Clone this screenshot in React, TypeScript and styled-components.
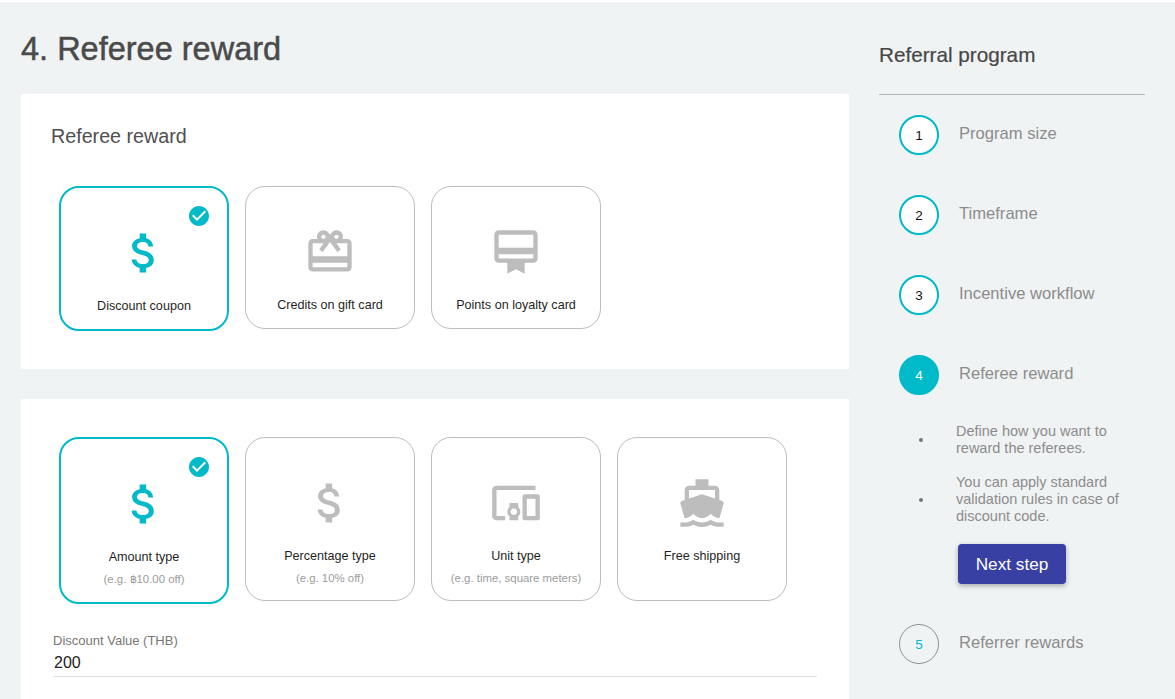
import React from 'react';
import styled, { createGlobalStyle } from 'styled-components';
import {
  MdAttachMoney,
  MdCardGiftcard,
  MdCardMembership,
  MdCheckCircle,
  MdDevicesOther,
  MdDirectionsBoat,
} from 'react-icons/md';

const teal = '#00b9c9';

const GlobalStyle = createGlobalStyle`
  html, body {
    margin: 0;
    height: 699px;
    overflow: hidden;
    background: #fff;
    font-family: "Liberation Sans", Arial, sans-serif;
  }
`;

const Page = styled.div`
  display: flex;
  gap: 30px;
  height: 697px;
  margin-top: 2px;
  padding: 0 30px 0 21px;
  overflow: hidden;
  background: #f0f3f4;
`;

const Main = styled.main`
  width: 828px;
  flex: none;
`;

const Heading = styled.h1`
  margin: 0;
  padding-top: 27px;
  box-sizing: border-box;
  height: 92px;
  font-size: 32.5px;
  line-height: 40px;
  font-weight: 400;
  color: #4a4a4a;
  -webkit-text-stroke: 0.5px #4a4a4a;
`;

const Card = styled.section<{ $top?: number }>`
  background: #fff;
  margin-bottom: 30px;
  padding: ${(p) => p.$top ?? 30}px 30px 38px 38px;
`;

const CardTitle = styled.h2`
  margin: 0 0 38px -8px;
  font-size: 19.7px;
  line-height: 24px;
  font-weight: 400;
  color: #4f4f4f;
`;

const TileRow = styled.div`
  display: flex;
  align-items: flex-start;
  gap: 16px;
`;

const Tile = styled.div<{ $selected?: boolean; $tall?: boolean }>`
  position: relative;
  box-sizing: border-box;
  width: 170px;
  height: ${(p) => (p.$tall ? (p.$selected ? 167 : 164) : p.$selected ? 145 : 143)}px;
  padding-top: 39px;
  border: ${(p) => (p.$selected ? `2px solid ${teal}` : '1px solid #bdbdbd')};
  border-radius: 20px;
  display: flex;
  flex-direction: column;
  align-items: center;
  color: ${(p) => (p.$selected ? teal : '#bdbdbd')};
`;

const Badge = styled.span`
  position: absolute;
  top: 16px;
  right: 16px;
  display: flex;
  font-size: 24px;
  color: ${teal};
`;

const IconBox = styled.span`
  display: flex;
  font-size: 52px;
  height: 52px;
`;

const TileLabel = styled.div`
  margin-top: 19px;
  font-size: 12.6px;
  line-height: 16px;
  color: #1f1f1f;
`;

const TileHint = styled.div`
  margin-top: 7px;
  font-size: 11.4px;
  line-height: 14px;
  color: #9b9b9b;
`;

const Field = styled.div`
  margin: 29px 0 0 -6px;
  width: 764px;
  border-bottom: 1px solid #e0e0e0;
`;

const FieldLabel = styled.div`
  font-size: 13px;
  line-height: 16px;
  color: #777;
`;

const FieldValue = styled.div`
  margin: 4px 0 0 1px;
  padding-bottom: 3px;
  font-size: 16px;
  line-height: 20px;
  color: #222;
`;

const Sidebar = styled.aside`
  width: 266px;
  flex: none;
`;

const SideTitle = styled.h2`
  margin: 0;
  box-sizing: border-box;
  height: 93px;
  padding-top: 41px;
  border-bottom: 1px solid #b5b8ba;
  font-size: 20.7px;
  line-height: 24px;
  font-weight: 400;
  color: #474747;
  -webkit-text-stroke: 0.2px #474747;
`;

const Steps = styled.div`
  display: flex;
  flex-direction: column;
  gap: 40px;
  padding: 20px 0 0 20px;
`;

const StepRow = styled.div`
  display: flex;
  gap: 20px;
  align-items: flex-start;
`;

const Circle = styled.div<{ $state: 'done' | 'active' | 'todo' }>`
  box-sizing: border-box;
  width: 40px;
  height: 40px;
  flex: none;
  border-radius: 50%;
  display: flex;
  align-items: center;
  justify-content: center;
  font-size: 13.5px;
  border: ${(p) => (p.$state === 'todo' ? '1px solid #8f8f8f' : `2px solid ${teal}`)};
  background: ${(p) => (p.$state === 'done' ? '#fff' : p.$state === 'active' ? teal : 'transparent')};
  color: ${(p) => (p.$state === 'done' ? '#111' : p.$state === 'active' ? '#fff' : teal)};
`;

const StepLabel = styled.div`
  font-size: 16.6px;
  line-height: 20px;
  margin-top: 9px;
  color: #8c8c8c;
`;

const Details = styled.div`
  margin-top: -12px;
  padding-left: 20px;
`;

const Tips = styled.ul`
  margin: 0;
  padding: 0;
  list-style: none;
  display: flex;
  flex-direction: column;
  gap: 17px;
`;

const Tip = styled.li`
  display: flex;
  align-items: center;
  font-size: 14.5px;
  line-height: 17px;
  color: #8c8c8c;
  &::before {
    content: '';
    flex: none;
    width: 4px;
    height: 4px;
    margin-right: 33px;
    border-radius: 50%;
    background: #777;
  }
`;

const NextButton = styled.button`
  display: block;
  width: 108px;
  height: 40px;
  margin: 19px 0 0 39px;
  border: 0;
  border-radius: 4px;
  background: #3840a3;
  color: #fff;
  font-family: inherit;
  font-size: 17.2px;
  box-shadow: 0 2px 5px rgba(0, 0, 0, 0.3);
`;

const rewards = [
  { label: 'Discount coupon', Icon: MdAttachMoney, selected: true },
  { label: 'Credits on gift card', Icon: MdCardGiftcard },
  { label: 'Points on loyalty card', Icon: MdCardMembership },
];

const types = [
  { label: 'Amount type', hint: '(e.g. ฿10.00 off)', Icon: MdAttachMoney, selected: true },
  { label: 'Percentage type', hint: '(e.g. 10% off)', Icon: MdAttachMoney },
  { label: 'Unit type', hint: '(e.g. time, square meters)', Icon: MdDevicesOther },
  { label: 'Free shipping', Icon: MdDirectionsBoat },
];

const App = () => (
  <Page>
    <GlobalStyle />
    <Main>
      <Heading>4. Referee reward</Heading>
      <Card>
        <CardTitle>Referee reward</CardTitle>
        <TileRow>
          {rewards.map(({ label, Icon, selected }) => (
            <Tile key={label} $selected={selected}>
              {selected && (
                <Badge>
                  <MdCheckCircle />
                </Badge>
              )}
              <IconBox>
                <Icon />
              </IconBox>
              <TileLabel>{label}</TileLabel>
            </Tile>
          ))}
        </TileRow>
      </Card>
      <Card $top={38}>
        <TileRow>
          {types.map(({ label, hint, Icon, selected }) => (
            <Tile key={label} $selected={selected} $tall>
              {selected && (
                <Badge>
                  <MdCheckCircle />
                </Badge>
              )}
              <IconBox>
                <Icon />
              </IconBox>
              <TileLabel>{label}</TileLabel>
              {hint && <TileHint>{hint}</TileHint>}
            </Tile>
          ))}
        </TileRow>
        <Field>
          <FieldLabel>Discount Value (THB)</FieldLabel>
          <FieldValue>200</FieldValue>
        </Field>
      </Card>
    </Main>
    <Sidebar>
      <SideTitle>Referral program</SideTitle>
      <Steps>
        <StepRow>
          <Circle $state="done">1</Circle>
          <StepLabel>Program size</StepLabel>
        </StepRow>
        <StepRow>
          <Circle $state="done">2</Circle>
          <StepLabel>Timeframe</StepLabel>
        </StepRow>
        <StepRow>
          <Circle $state="done">3</Circle>
          <StepLabel>Incentive workflow</StepLabel>
        </StepRow>
        <StepRow>
          <Circle $state="active">4</Circle>
          <StepLabel>Referee reward</StepLabel>
        </StepRow>
        <Details>
          <Tips>
            <Tip>
              <span>
                Define how you want to
                <br />
                reward the referees.
              </span>
            </Tip>
            <Tip>
              <span>
                You can apply standard
                <br />
                validation rules in case of
                <br />
                discount code.
              </span>
            </Tip>
          </Tips>
          <NextButton>Next step</NextButton>
        </Details>
        <StepRow>
          <Circle $state="todo">5</Circle>
          <StepLabel>Referrer rewards</StepLabel>
        </StepRow>
      </Steps>
    </Sidebar>
  </Page>
);

export default App;
